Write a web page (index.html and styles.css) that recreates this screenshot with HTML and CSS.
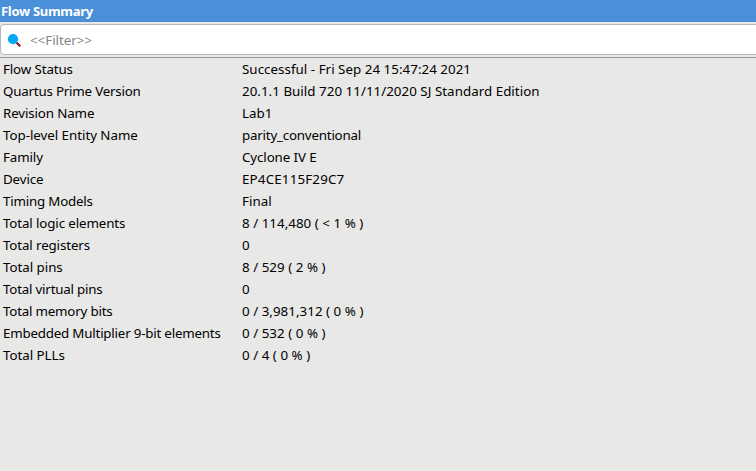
FILE: index.html
```html
<!DOCTYPE html>
<html lang="en">
<head>
<meta charset="utf-8">
<title>Flow Summary</title>
<link rel="stylesheet" href="styles.css">
</head>
<body>
<header class="title">Flow Summary</header>
<div class="filter">
<svg class="search" width="16" height="16" viewBox="0 0 16 16"><path d="M9.5 9.5L13.3 13.3" stroke="#a51c20" stroke-width="2"/><path d="M9.2 10.2L12.8 13.8" stroke="#4b2630" stroke-width=".7"/><circle cx="6" cy="6.2" r="5.1" fill="#03a9f4"/></svg>
<span>&lt;&lt;Filter&gt;&gt;</span>
</div>
<dl class="summary">
<dt>Flow Status</dt><dd>Successful - Fri Sep 24 15:47:24 2021</dd>
<dt class="tight">Quartus Prime Version</dt><dd>20.1.1 Build 720 11/11/2020 SJ Standard Edition</dd>
<dt>Revision Name</dt><dd>Lab1</dd>
<dt class="wide">Top-level Entity Name</dt><dd class="identifier">parity_conventional</dd>
<dt>Family</dt><dd class="family">Cyclone IV E</dd>
<dt>Device</dt><dd class="device">EP4CE115F29C7</dd>
<dt class="tight">Timing Models</dt><dd>Final</dd>
<dt>Total logic elements</dt><dd>8 / 114,480 ( &lt; 1 % )</dd>
<dt>Total registers</dt><dd>0</dd>
<dt class="wide">Total pins</dt><dd>8 / 529 ( 2 % )</dd>
<dt class="tight">Total virtual pins</dt><dd>0</dd>
<dt class="tight">Total memory bits</dt><dd>0 / 3,981,312 ( 0 % )</dd>
<dt class="tight">Embedded Multiplier 9-bit elements</dt><dd>0 / 532 ( 0 % )</dd>
<dt class="wide">Total PLLs</dt><dd>0 / 4 ( 0 % )</dd>
</dl>
</body>
</html>
```
FILE: styles.css
```css
* { box-sizing: border-box; }
body { margin: 0; height: 471px; overflow: hidden; background: #e8e8e7; color: #000; font: 13.33px/22px "Noto Sans", sans-serif; }
.title { height: 22px; padding-left: 1px; background: #4a90d9; color: #fff; font-weight: 700; font-size: 13px; line-height: 23px; letter-spacing: -.3px; }
.filter { display: flex; align-items: center; height: 31px; margin: 2px -4px 0 0; padding-left: 6px; border: 1px solid #b6b6b3; border-radius: 4px; background: #fff; color: #858585; }
.search { margin: 2px 7px 0 0; }
.summary { display: grid; grid-template-columns: 239px 1fr; grid-auto-rows: 22px; margin: 2px 0 0; padding: 0 3px; border-top: 1px solid #999; white-space: pre; }
.summary dt { letter-spacing: -.12px; }
.summary .tight { letter-spacing: -.2px; }
.summary .wide { letter-spacing: -.03px; }
.summary dd { margin: 0; letter-spacing: .04px; }
.summary .identifier { letter-spacing: -.2px; }
.summary .family { letter-spacing: -.1px; }
.summary .device { letter-spacing: .18px; }
```
